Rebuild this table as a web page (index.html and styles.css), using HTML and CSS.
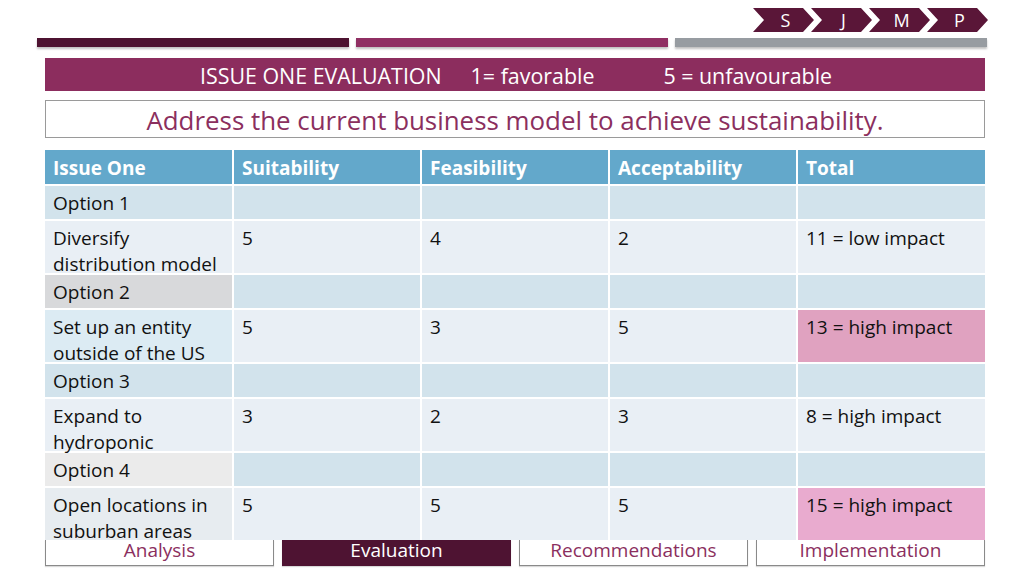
FILE: index.html
```html
<!DOCTYPE html>
<html>
<head>
<meta charset="utf-8">
<link rel="stylesheet" href="styles.css">
</head>
<body>
<div class="slide">
  <nav class="steps">
    <div class="chev">S</div>
    <div class="chev">J</div>
    <div class="chev">M</div>
    <div class="chev">P</div>
  </nav>
  <div class="bars">
    <div class="bar bar-dark"></div>
    <div class="bar bar-mid"></div>
    <div class="bar bar-gray"></div>
  </div>
  <div class="content">
    <div class="banner"><span class="b1">ISSUE ONE EVALUATION</span><span class="b2">1= favorable</span><span class="b3">5 = unfavourable</span></div>
    <div class="subtitle">Address the current business model to achieve sustainability.</div>
    <table class="eval">
      <colgroup><col><col><col><col><col></colgroup>
      <thead>
        <tr class="r-head"><th><div class="c">Issue One</div></th><th><div class="c">Suitability</div></th><th><div class="c">Feasibility</div></th><th><div class="c">Acceptability</div></th><th><div class="c">Total</div></th></tr>
      </thead>
      <tbody>
        <tr class="r-opt"><td><div class="c">Option 1</div></td><td><div class="c"></div></td><td><div class="c"></div></td><td><div class="c"></div></td><td><div class="c"></div></td></tr>
        <tr class="r-data"><td class="first f1"><div class="c">Diversify distribution model</div></td><td><div class="c">5</div></td><td><div class="c">4</div></td><td><div class="c">2</div></td><td><div class="c">11 = low impact</div></td></tr>
        <tr class="r-opt"><td class="o2"><div class="c">Option 2</div></td><td><div class="c"></div></td><td><div class="c"></div></td><td><div class="c"></div></td><td><div class="c"></div></td></tr>
        <tr class="r-data"><td class="first f2"><div class="c">Set up an entity outside of the US</div></td><td><div class="c">5</div></td><td><div class="c">3</div></td><td><div class="c">5</div></td><td class="pink1"><div class="c">13 = high impact</div></td></tr>
        <tr class="r-opt"><td><div class="c">Option 3</div></td><td><div class="c"></div></td><td><div class="c"></div></td><td><div class="c"></div></td><td><div class="c"></div></td></tr>
        <tr class="r-data"><td class="first f3"><div class="c">Expand to hydroponic</div></td><td><div class="c">3</div></td><td><div class="c">2</div></td><td><div class="c">3</div></td><td><div class="c">8 = high impact</div></td></tr>
        <tr class="r-opt"><td class="o4"><div class="c">Option 4</div></td><td><div class="c"></div></td><td><div class="c"></div></td><td><div class="c"></div></td><td><div class="c"></div></td></tr>
        <tr class="r-data r-last"><td class="first f4"><div class="c">Open locations in suburban areas</div></td><td><div class="c">5</div></td><td><div class="c">5</div></td><td><div class="c">5</div></td><td class="pink2"><div class="c">15 = high impact</div></td></tr>
      </tbody>
    </table>
    <div class="tabs">
      <div class="tab">Analysis</div>
      <div class="tab tab-active">Evaluation</div>
      <div class="tab">Recommendations</div>
      <div class="tab">Implementation</div>
    </div>
  </div>
</div>
</body>
</html>
```

FILE: styles.css
```css
* { box-sizing: border-box; }
html, body { margin: 0; padding: 0; background: #ffffff; }
body { font-family: "Open Sans", "Noto Sans", sans-serif; width: 1024px; height: 575px; overflow: hidden; }

.slide { display: flex; flex-direction: column; }

.steps { display: flex; justify-content: flex-end; padding: 8px 36px 0 0; height: 32px; }
.chev {
  width: 61px; height: 24px; margin-left: -3px;
  background: #5a1638; color: #fff;
  font-size: 18px; line-height: 24px; text-align: center;
  padding-left: 4px;
  clip-path: polygon(0 0, 50px 0, 61px 50%, 50px 100%, 0 100%, 11px 50%);
}

.bars { display: flex; gap: 7px; padding: 6px 0 0 37px; }
.bar { width: 312px; height: 9px; box-shadow: 0 2px 2px rgba(0,0,0,0.25); }
.bar-dark { background: #4e1331; }
.bar-mid { background: #902f63; }
.bar-gray { background: #979ca1; }

.content { margin: 11px 0 0 45px; width: 940px; display: flex; flex-direction: column; }

.banner {
  height: 33px; background: #8c2d5e; color: #fff;
  font-size: 21.4px; line-height: 35px; padding-left: 155px; white-space: pre;
  display: flex;
}
.b2 { margin-left: 29px; }
.b3 { margin-left: 69px; }

.subtitle {
  margin-top: 9px; height: 38px; border: 1px solid #9a9a9a;
  color: #8b2f5e; font-size: 25.9px; line-height: 38px; text-align: center;
}

.eval {
  margin-top: 12px; width: 940px; table-layout: fixed;
  border-collapse: collapse; font-size: 19px; line-height: 26px; color: #111;
}
.eval col { width: 188px; }
.eval th, .eval td {
  border: 2px solid #fff; padding: 0; vertical-align: top; text-align: left;
}
.c { padding: 4px 8px 0 8px; overflow: visible; white-space: normal; }
.eval tr:first-child th { border-top: none; }
.eval th:first-child, .eval td:first-child { border-left: none; }
.eval th:last-child, .eval td:last-child { border-right: none; }
.r-head th { background: #63a8cb; color: #fff; font-weight: 700; }
.r-head .c { height: 34px; padding-top: 5px; }
.r-opt td { background: #d2e3ec; }
.r-opt .c { height: 33px; }
.r-data td { background: #e9eff5; }
.r-data .c { height: 52px; }
.r-last td { border-bottom: none; }
.r-last .c { height: 52px; }
.first.f2 { background: #dcebf3; }
.first.f4 { background: #e7ecf0; }
.o2 { background: #d8d9db !important; }
.o4 { background: #ebebeb !important; }
.pink1 { background: #e0a2c0 !important; }
.pink2 { background: #e9abcf !important; }

.tabs { display: flex; justify-content: space-between; height: 26px; }
.tab {
  width: 229px; height: 26px; border: 1px solid #8a8a8a; border-top: none;
  color: #8b2f5e; font-size: 19px; line-height: 20px; text-align: center;
  box-shadow: 0 1px 1px rgba(0,0,0,0.15);
}
.tab-active { background: #4e1332; color: #fff; border-color: #4e1332; }
```
